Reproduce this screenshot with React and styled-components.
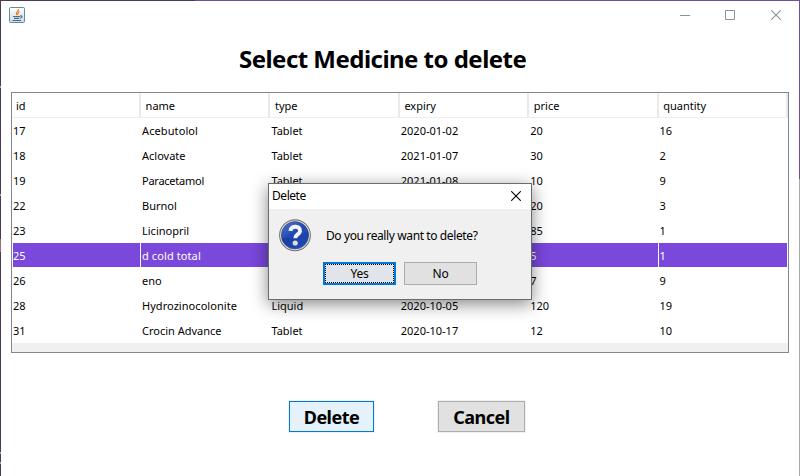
import React from "react";
import styled, { createGlobalStyle } from "styled-components";

const Global = createGlobalStyle`
  * { box-sizing: border-box; }
  body { margin: 0; background: #fff; }
  button { margin: 0; padding: 0; font-family: inherit; }
`;

const Window = styled.main`
  position: relative;
  width: 800px;
  height: 476px;
  overflow: hidden;
  display: flex;
  flex-direction: column;
  background: #fff;
  color: #000;
  font: 11px/14px "Noto Sans", "Open Sans", sans-serif;
`;

const Edge = styled.div`
  position: absolute;
  ${({ $side }) =>
    $side === "top" ? "top: 0; left: 0; right: 0; height: 1px;" : `top: 0; bottom: 0; ${$side}: 0; width: 1px;`}
  background: ${({ $fill }) => $fill};
`;

const TitleBar = styled.header`
  display: flex;
  justify-content: space-between;
  height: 30px;
  padding: 7px 19px 0 9px;
`;

const Controls = styled.div`
  display: flex;
  gap: 35px;
  padding-top: 3px;
  color: #919191;
  svg { display: block; }
  svg:last-child { margin-left: 1px; }
`;

const Heading = styled.h1`
  margin: 12px 0 0 239px;
  height: 50px;
  font-size: 24px;
  line-height: 34px;
  font-weight: 700;
  letter-spacing: -0.53px;
  white-space: nowrap;
`;

const Table = styled.section`
  width: 778px;
  height: 261px;
  margin-left: 11px;
  border: 1px solid #828790;
  background: #f0f0f0;
`;

const HeaderRow = styled.div`
  display: grid;
  grid-template-columns: 129px repeat(5, 129.4px);
  height: 25px;
  border-bottom: 1px solid #ededed;
  background: #fff;
`;

const HeaderCell = styled.div`
  padding: 6px 0 0 4px;
  border-right: 2px solid #e9e9e9;
  & + & { padding-left: 4.6px; }
`;

const Row = styled.div`
  display: grid;
  grid-template-columns: 128px repeat(5, 129.4px);
  height: 25px;
  background: #fff;
`;

const Cell = styled.div`
  height: 24px;
  margin-left: 1px;
  padding-top: 6px;
  letter-spacing: ${({ $track }) => $track || 0}px;
  white-space: nowrap;
  background: ${({ $selected }) => ($selected ? "#7a48db" : "#fff")};
  color: ${({ $selected }) => ($selected ? "#fff" : "#000")};
  & + & { padding-left: 1px; }
`;

const Actions = styled.footer`
  display: flex;
  gap: 64px;
  margin: 48px 0 0 289px;
`;

const ActionButton = styled.button`
  width: ${({ $width }) => $width}px;
  height: 31px;
  padding-top: 2px;
  border: 1px solid ${({ $hot }) => ($hot ? "#0078d7" : "#adadad")};
  background: ${({ $hot }) => ($hot ? "#e5f1fb" : "#e1e1e1")};
  outline: 1px solid #f0f0f0;
  color: #000;
  font-size: 18px;
  line-height: 27px;
  font-weight: 700;
  letter-spacing: -0.5px;
`;

const Dialog = styled.section`
  position: absolute;
  left: 268px;
  top: 183px;
  width: 264px;
  height: 117px;
  border: 1px solid #6b6b6b;
  background: #f0f0f0;
  box-shadow: 0 4px 16px rgba(0, 0, 0, 0.48);
`;

const DialogTitle = styled.header`
  display: flex;
  justify-content: space-between;
  height: 25px;
  padding: 5px 10px 0 3px;
  background: #fff;
  font-size: 12px;
  letter-spacing: -0.45px;
  svg { margin-top: 2px; }
`;

const Message = styled.div`
  display: flex;
  align-items: center;
  gap: 14px;
  height: 53px;
  padding-left: 9px;
  font-size: 12px;
  letter-spacing: -0.39px;
`;

const Choices = styled.div`
  display: flex;
  gap: 8px;
  padding-left: 54px;
`;

const Choice = styled.button`
  width: 73px;
  height: 23px;
  border: ${({ $focused }) => ($focused ? "2px solid #0078d7" : "1px solid #adadad")};
  background: ${({ $focused }) => ($focused ? "#e1e4e8" : "#e1e1e1")};
  color: #000;
  font-size: 12px;
  line-height: 18px;
  letter-spacing: -0.2px;
  outline: ${({ $focused }) => ($focused ? "1px dotted #000" : "none")};
  outline-offset: -3px;
`;

const columns = ["id", "name", "type", "expiry", "price", "quantity"];
const medicines = [
  ["17", "Acebutolol", "Tablet", "2020-01-02", "20", "16"],
  ["18", "Aclovate", "Tablet", "2021-01-07", "30", "2"],
  ["19", "Paracetamol", "Tablet", "2021-01-08", "10", "9"],
  ["22", "Burnol", "", "", "20", "3"],
  ["23", "Licinopril", "", "", "85", "1"],
  ["25", "d cold total", "", "", "5", "1"],
  ["26", "eno", "", "", "7", "9"],
  ["28", "Hydrozinocolonite", "Liquid", "2020-10-05", "120", "19"],
  ["31", "Crocin Advance", "Tablet", "2020-10-17", "12", "10"],
];
const tracking = {
  Acebutolol: 0.1,
  Paracetamol: -0.25,
  "d cold total": 0.1,
  Hydrozinocolonite: 0.05,
};

const JavaIcon = () => (
  <svg width="16" height="16" viewBox="0 0 16 16">
    <defs>
      <linearGradient id="tile" x2="0" y2="1">
        <stop stopColor="#fff" />
        <stop offset="1" stopColor="#ced8e0" />
      </linearGradient>
    </defs>
    <rect x=".5" y=".5" width="15" height="15" rx="1" fill="url(#tile)" stroke="#6889a2" />
    <path d="M9.8 2.2C10 4.3 6 4.8 7.7 8M10.6 4.8C8.3 5.8 9.4 6.7 8.4 8" fill="none" stroke="#ed7d25" strokeWidth="1.2" />
    <path d="M4 9.5h7M5 11.4h5M3.5 13.5h8.5M11 9c3-.7 2.4 2-.2 2.3" fill="none" stroke="#456d8d" strokeWidth="1.1" />
  </svg>
);

const CloseIcon = ({ color = "currentColor" }) => (
  <svg width="10" height="10" viewBox="0 0 10 10">
    <path d="M.2.2l9.6 9.6M9.8.2.2 9.8" stroke={color} strokeWidth="1.1" />
  </svg>
);

const QuestionIcon = () => (
  <svg width="34" height="34" viewBox="0 0 34 34">
    <defs>
      <linearGradient id="ball" x2="0.7" y2="1">
        <stop stopColor="#5578d0" />
        <stop offset=".5" stopColor="#2149ae" />
        <stop offset="1" stopColor="#2c58cc" />
      </linearGradient>
    </defs>
    <circle cx="17" cy="16.3" r="15.4" fill="#e8e8e8" stroke="#777" strokeWidth="1.1" />
    <circle cx="17" cy="16.3" r="13.7" fill="url(#ball)" stroke="#38436b" strokeWidth=".6" />
    <path d="M3.6 19C12 20 22 17 29.8 12A13.5 13.5 0 0 1 3.6 19Z" fill="#123699" opacity=".5" />
    <path d="M12.4 11.8c.4-5.9 10.2-5.3 9.6.3-.3 3.4-4.8 3.4-4.8 7.2" fill="none" stroke="#f4f4f4" strokeWidth="4" />
    <circle cx="17.2" cy="24" r="2.6" fill="#ddd" />
  </svg>
);

export default function App() {
  return (
    <>
      <Global />
      <Window>
        <TitleBar>
          <JavaIcon />
          <Controls>
            <svg width="10" height="10"><path d="M0 5.5h10" stroke="currentColor" /></svg>
            <svg width="10" height="10"><path d="M.5.5h9v9h-9z" fill="none" stroke="currentColor" /></svg>
            <CloseIcon />
          </Controls>
        </TitleBar>
        <Heading>Select Medicine to delete</Heading>
        <Table>
          <HeaderRow>
            {columns.map((label) => <HeaderCell key={label}>{label}</HeaderCell>)}
          </HeaderRow>
          {medicines.map((row) => (
            <Row key={row[0]}>
              {row.map((value, i) => (
                <Cell key={i} $selected={row[0] === "25"} $track={tracking[value]}>{value}</Cell>
              ))}
            </Row>
          ))}
        </Table>
        <Actions>
          <ActionButton $width={85} $hot>Delete</ActionButton>
          <ActionButton $width={87}>Cancel</ActionButton>
        </Actions>
        <Edge $side="top" $fill="linear-gradient(90deg, #463a56 195px, #6c5098 195px)" />
        <Edge $side="left" $fill="linear-gradient(#463a56 86px, #aaa 86px 88px, #463a56 88px 194px, #aaa 194px 196px, #463a56 196px 239px, #a66b77 239px 252px, #463a56 252px 452px, #aaa 452px 454px, #463a56 454px 462px, #aaa 462px 464px, #463a56 464px)" />
        <Edge $side="right" $fill="linear-gradient(#6c5098 179px, #aaa 179px)" />
        <Dialog>
          <DialogTitle>Delete<CloseIcon color="#000" /></DialogTitle>
          <Message><QuestionIcon />Do you really want to delete?</Message>
          <Choices>
            <Choice $focused>Yes</Choice>
            <Choice>No</Choice>
          </Choices>
        </Dialog>
      </Window>
    </>
  );
}
